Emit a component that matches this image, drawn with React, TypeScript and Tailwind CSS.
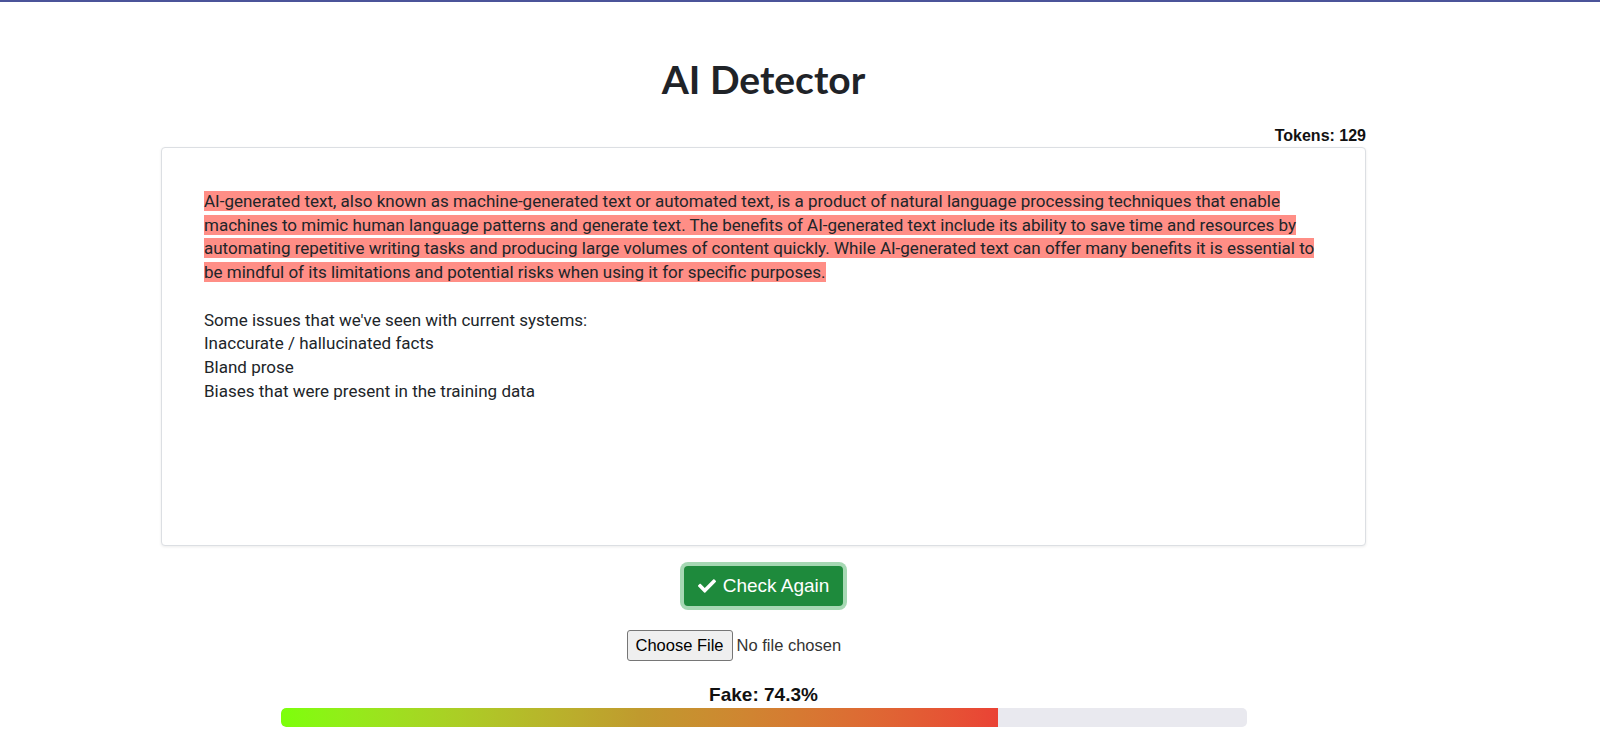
import { FaCheck } from "react-icons/fa";

const highlighted =
    "AI-generated text, also known as machine-generated text or automated text, is a product of natural language processing techniques that enable machines to mimic human language patterns and generate text. The benefits of AI-generated text include its ability to save time and resources by automating repetitive writing tasks and producing large volumes of content quickly. While AI-generated text can offer many benefits it is essential to be mindful of its limitations and potential risks when using it for specific purposes.";

const plainLines = [
    "Some issues that we've seen with current systems:",
    "Inaccurate / hallucinated facts",
    "Bland prose",
    "Biases that were present in the training data",
];

const fakeScore = 74.3;

function ScoreBar({ value }: { value: number }) {
    return (
        <div className="w-[966px] h-[19px] rounded-[5px] bg-[#e9e9ef] overflow-hidden">
            <div
                className="h-full rounded-l-[5px] bg-gradient-to-r from-[#7cff0a] via-[#c09a2e] to-[#ea4235]"
                style={{ width: `${value}%` }}
            />
        </div>
    );
}

export default function App() {
    return (
        <div className="min-h-screen bg-white border-t-2 border-[#4b5499] font-['Liberation_Sans',Arial,sans-serif] text-[#212529]">
            <div className="w-[1527px] flex flex-col items-center">
                <h1 className="mt-[53px] text-[39px] leading-[48px] font-bold font-['Lato',sans-serif] text-[#1f2328]">
                    AI Detector
                </h1>

                <div className="w-[1205px] mt-[22px] flex justify-end">
                    <span className="text-[16px] leading-[21px] font-bold text-[#111]">
                        Tokens: 129
                    </span>
                </div>

                <div className="w-[1205px] h-[399px] mt-[1px] border border-[#dcdfe3] rounded-[4px] shadow-[0_1px_3px_rgba(0,0,0,0.08)] bg-white pt-[42px] px-[42px] font-['Roboto',sans-serif] text-[17px] leading-[23.7px] text-[#212529]">
                    <p>
                        <span className="bg-[#ff8e86]">{highlighted} </span>
                    </p>
                    <p className="mt-[23.7px]">
                        {plainLines.map((line) => (
                            <span key={line} className="block">
                                {line}
                            </span>
                        ))}
                    </p>
                </div>

                <button className="mt-[20px] h-[40px] px-[14px] flex items-center gap-[7px] rounded-[4px] bg-[#1e8a3c] text-white text-[19px] shadow-[0_0_0_4px_#a6d8b3]">
                    <FaCheck className="w-[18px] h-[18px]" />
                    Check Again
                </button>

                <div className="mt-[24px] w-[274px] flex items-center gap-[4px] text-[16.5px]">
                    <span className="h-[31px] px-[8px] flex items-center border border-[#767676] rounded-[3px] bg-[#efefef] text-black">
                        Choose File
                    </span>
                    <span className="text-[#333]">No file chosen</span>
                </div>

                <div className="mt-[23px] text-[19px] leading-[22px] font-bold text-[#111]">
                    Fake: {fakeScore}%
                </div>

                <div className="mt-[2px]">
                    <ScoreBar value={fakeScore} />
                </div>
            </div>
        </div>
    );
}
